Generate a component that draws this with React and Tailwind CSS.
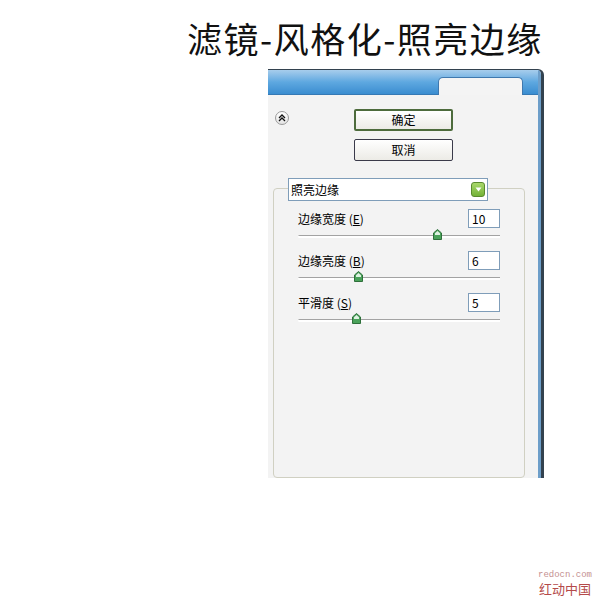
import React from "react";

const font = { fontFamily: '"Noto Sans CJK SC", "Noto Sans", sans-serif' };

const Thumb = () => (
  <svg width="9" height="11" viewBox="0 0 9 11">
    <path d="M4.5 0.5 L8.5 4 L8.5 10.5 L0.5 10.5 L0.5 4 Z" fill="#4aa25a" stroke="#2e6f3a" />
    <path d="M4.5 2 L7 4.3 L7 6 L2 6 L2 4.3 Z" fill="#dff2e2" />
  </svg>
);

const Slider = ({ pos }) => (
  <div className="h-[16px] flex items-center">
    <div className="relative w-full h-[3px] border-t border-[#a3a3a3] border-b-[2px] border-b-white rounded-l-full">
      <div className="absolute top-[-7px]" style={{ left: pos - 4 }}>
        <Thumb />
      </div>
    </div>
  </div>
);

const Field = ({ label, hot, value }) => (
  <div className="h-[19px] flex items-center justify-between">
    <span className="text-[12px] leading-none text-black">
      {label} (<span className="underline">{hot}</span>)
    </span>
    <div className="w-[32px] h-[19px] bg-white border border-[#7f9db9] text-[12px] leading-[17px] pl-[3px] text-black">
      {value}
    </div>
  </div>
);

const Button = ({ children, primary }) => (
  <button
    className={
      "w-[99px] h-[22px] rounded-[2px] bg-gradient-to-b from-white to-[#ecebe6] text-[12px] leading-none text-black " +
      (primary ? "border-2 border-[#4d6b3c]" : "border border-[#3a3a4a]")
    }
  >
    {children}
  </button>
);

export default function App() {
  return (
    <div className="w-[600px] h-[600px] bg-white overflow-hidden" style={font}>
      <div className="pl-[187px] pt-[18px] h-[69px]">
        <h1 className="text-[35px] leading-[40px] text-[#111] font-normal tracking-[1.5px]">
          滤镜-风格化-照亮边缘
        </h1>
      </div>

      <div className="ml-[268px] w-[276px] h-[409px] flex border-t border-r-[3px] border-[#33424f] rounded-tr-[6px] overflow-hidden">
        <div className="flex-1 flex flex-col">
          <div className="h-[26px] flex justify-end items-end pr-[15px] bg-gradient-to-b from-[#a7cdec] via-[#5ea8e0] to-[#3a8dd0] border-b border-[#3579b4]">
            <div className="w-[85px] h-[18px] -mb-px bg-[#f4f4f4] rounded-t-[5px] border-t border-l border-r border-[#3f78ae]"></div>
          </div>

          <div className="flex-1 bg-[#f3f3f3] flex flex-col pr-[13px]">
            <div className="flex pl-[7px] pt-[14px]">
              <div className="mt-[2px] w-[14px] h-[14px] rounded-full border border-[#9a9a9a] bg-gradient-to-b from-white to-[#e4e4e4] flex items-center justify-center">
                <svg width="8" height="8" viewBox="0 0 8 8">
                  <path d="M1 4 L4 1 L7 4 M1 7 L4 4 L7 7" fill="none" stroke="#111" strokeWidth="1.3" />
                </svg>
              </div>
              <div className="ml-[65px] flex flex-col gap-[8px]">
                <Button primary>确定</Button>
                <Button>取消</Button>
              </div>
            </div>

            <div className="ml-[5px] mt-[27px] w-[252px] h-[290px] border border-[#d0d0c2] rounded-[4px] px-[24px]">
              <div className="-mt-[11px] -ml-[10px] w-[200px] h-[23px] bg-white border border-[#7f9db9] flex items-center justify-between pl-[2px] pr-[2px]">
                <span className="text-[12px] leading-none text-black">照亮边缘</span>
                <div className="w-[14px] h-[15px] rounded-[3px] border border-[#5a8a2e] bg-gradient-to-b from-[#a9d86a] to-[#73b236] flex items-center justify-center">
                  <svg width="7" height="5" viewBox="0 0 7 5">
                    <path d="M0.5 0.5 L6.5 0.5 L3.5 4.5 Z" fill="#fff" />
                  </svg>
                </div>
              </div>

              <div className="mt-[8px] flex flex-col gap-[7px]">
                <div>
                  <Field label="边缘宽度" hot="E" value="10" />
                  <Slider pos={139} />
                </div>
                <div>
                  <Field label="边缘亮度" hot="B" value="6" />
                  <Slider pos={60} />
                </div>
                <div>
                  <Field label="平滑度" hot="S" value="5" />
                  <Slider pos={58} />
                </div>
              </div>
            </div>
          </div>
        </div>
        <div className="w-[3px] bg-[#6d9ec9]"></div>
      </div>

      <div className="flex justify-end pr-[8px] mt-[92px]">
        <div className="flex flex-col items-center">
          <span className="text-[9px] leading-[11px] text-[#c49090]" style={{ fontFamily: '"Liberation Mono", monospace' }}>
            redocn.com
          </span>
          <span className="text-[13px] leading-[15px] text-[#b44a4a]">红动中国</span>
        </div>
      </div>
    </div>
  );
}
